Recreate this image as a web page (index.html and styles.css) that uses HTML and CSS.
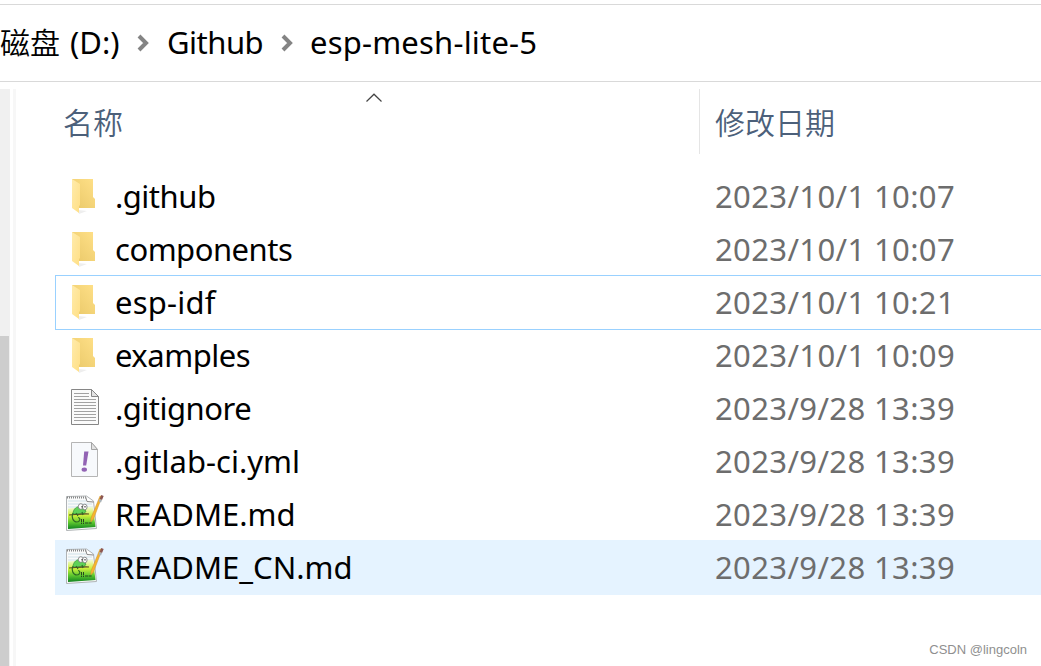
FILE: index.html
```html
<!DOCTYPE html>
<html lang="zh-CN">
<head>
    <meta charset="UTF-8">
    <title>esp-mesh-lite-5</title>
    <link rel="stylesheet" href="styles.css">
</head>
<body>
    <!-- shared icons -->
    <svg class="icons">
        <defs>
            <linearGradient id="back" x1="0" y1="1" x2="1" y2="0">
                <stop offset="0" stop-color="#e9c868"/>
                <stop offset="1" stop-color="#ffe088"/>
            </linearGradient>
            <linearGradient id="front" x1="0" y1="0" x2="1" y2="1">
                <stop offset="0" stop-color="#ffebab"/>
                <stop offset="1" stop-color="#ffdf85"/>
            </linearGradient>
            <linearGradient id="grass" x1="0" y1="0" x2="0" y2="1">
                <stop offset="0" stop-color="#f4fbe0"/>
                <stop offset="0.4" stop-color="#cdf03c"/>
                <stop offset="0.7" stop-color="#5fc92f"/>
                <stop offset="1" stop-color="#118322"/>
            </linearGradient>
        </defs>
        <symbol id="folder" viewBox="0 0 40 40">
            <path d="M13 33l9 1-8 3z" fill="#eeeeee"/>
            <path d="M7 2h21v18l2 2v9H14L7 29z" fill="url(#back)"/>
            <path d="M7 2l8 5v21l-1 1v7l-7-5z" fill="url(#front)"/>
        </symbol>
        <symbol id="text" viewBox="0 0 40 40">
            <path d="M6.500 .5h20l7 7v28h-27z" fill="#fbfbfb" stroke="#868686"/>
            <path d="M26.500 .5v7h7z" fill="#e3e3e3" stroke="#868686"/>
            <path d="M9 4.500h15M9 7.500h15M9 10.500h22M9 13.500h22M9 16.500h22M9 19.500h22M9 22.500h22M9 25.500h22M9 28.500h22M9 31.500h22" stroke="#a2a2a2"/>
        </symbol>
        <symbol id="yml" viewBox="0 0 40 40">
            <path d="M6.500 .5h20l6 7v27h-26z" fill="#f7f9fc" stroke="#b5b5b5"/>
            <path d="M26.500 .5v7h6z" fill="#e3e3e3" stroke="#a5a5a5"/>
            <path d="M19.200 9.500h4.300l-2.300 14h-3.200z" fill="#9263b4"/>
            <ellipse cx="19.300" cy="27.600" rx="2.700" ry="2.200" fill="#9263b4"/>
        </symbol>
        <symbol id="notepad" viewBox="0 0 40 40">
            <path d="M1.500 1.500l20-.5 7 5 3 27.500-30 2z" fill="#f9fafa" stroke="#b0b4b6"/>
            <path d="M3 6h18M3 9h24M3 12h25" stroke="#cfe2ea"/>
            <path d="M3 13.500l25-2 2.500 20.500-27.500 2z" fill="url(#grass)"/>
            <path d="M2 2.500h19" stroke="#888" stroke-width="2" stroke-dasharray="1 1"/>
            <path d="M20.500 1.500l1.500 5 6.500 .5" fill="#fff" stroke="#888"/>
            <path d="M8 19c0-5 4-8.500 8-7l5 4c-1 3-4 3-8 3z" fill="#5fd257" stroke="#3a9a3c" stroke-width=".8"/>
            <path d="M4 20c6 0 11-1.500 20-1" fill="none" stroke="#5b4a24" stroke-width="1.200"/>
            <path d="M8 18c-2 4 0 9 4 9 3 0 4-4 1-4.500M11 18l2 3M17 17l1 3" fill="none" stroke="#2f6b25" stroke-width="1.200"/>
            <ellipse cx="15.800" cy="11.500" rx="2.500" ry="2.800" fill="#fff" stroke="#777" stroke-width=".8"/>
            <ellipse cx="19.800" cy="12" rx="2.300" ry="2.800" fill="#fff" stroke="#777" stroke-width=".8"/>
            <path d="M17 11v1.500M20 11v1.500" stroke="#222"/>
            <path d="M16.500 24v5M18.500 24v5M20 28h7" stroke="#25471f" stroke-dasharray="3 .6"/>
            <path d="M37 1.500l-8.500 22.500-2.700 3 .2-4L35 1z" fill="#f7b52c" stroke="#c98f3b" stroke-width=".5"/>
            <path d="M37.500 .5l-1.700 4" stroke="#8c5752" stroke-width="2.600"/>
            <path d="M35.800 4.500l-1 2.500" stroke="#a9b2b8" stroke-width="2.600"/>
        </symbol>
    </svg>

    <div class="address">
        <span class="crumb drive"><span class="cn">地磁盘</span> (D:)</span>
        <svg class="chevron" viewBox="0 0 13 18"><path d="M2 2l7 7-7 7"/></svg>
        <span class="crumb github">Github</span>
        <svg class="chevron" viewBox="0 0 13 18"><path d="M2 2l7 7-7 7"/></svg>
        <span class="crumb current">esp-mesh-lite-5</span>
    </div>

    <div class="main">
        <div class="scrollbar"><div class="thumb"></div></div>
        <div class="divider"></div>
        <div class="files">
            <div class="header">
                <div class="col-name">名称
                    <svg class="sort" viewBox="0 0 16 10"><path d="M.5 8.500l7.500-7.300 7.500 7.300"/></svg>
                </div>
                <div class="col-date">修改日期</div>
            </div>
            <div class="row">
                <svg class="icon"><use href="#folder"/></svg>
                <span class="name narrow">.github</span>
                <span class="date">2023/10/1 10:07</span>
            </div>
            <div class="row">
                <svg class="icon"><use href="#folder"/></svg>
                <span class="name narrow">components</span>
                <span class="date">2023/10/1 10:07</span>
            </div>
            <div class="row focused">
                <svg class="icon"><use href="#folder"/></svg>
                <span class="name wide">esp-idf</span>
                <span class="date">2023/10/1 10:21</span>
            </div>
            <div class="row">
                <svg class="icon"><use href="#folder"/></svg>
                <span class="name narrow">examples</span>
                <span class="date">2023/10/1 10:09</span>
            </div>
            <div class="row">
                <svg class="icon"><use href="#text"/></svg>
                <span class="name narrow">.gitignore</span>
                <span class="date">2023/9/28 13:39</span>
            </div>
            <div class="row">
                <svg class="icon"><use href="#yml"/></svg>
                <span class="name">.gitlab-ci.yml</span>
                <span class="date">2023/9/28 13:39</span>
            </div>
            <div class="row">
                <svg class="icon"><use href="#notepad"/></svg>
                <span class="name">README.md</span>
                <span class="date">2023/9/28 13:39</span>
            </div>
            <div class="row hover">
                <svg class="icon"><use href="#notepad"/></svg>
                <span class="name">README_CN.md</span>
                <span class="date">2023/9/28 13:39</span>
            </div>
            <div class="watermark">CSDN @lingcoln</div>
        </div>
    </div>
</body>
</html>
```
FILE: styles.css
```css
* {
    box-sizing: border-box;
}
body {
    margin: 0;
    height: 666px;
    overflow: hidden;
    padding-top: 4px;
    background-color: #fff;
    color: #000;
    font-family: "Noto Sans", "Noto Sans CJK SC", sans-serif;
    font-size: 31px;
    display: flex;
    flex-direction: column;
}
.icons {
    position: absolute;
    width: 0;
    height: 0;
}

/* address bar */
.address {
    height: 78px;
    flex: none;
    display: flex;
    align-items: center;
    border-top: 1px solid #d9d9d9;
    border-bottom: 1px solid #d9d9d9;
    white-space: nowrap;
}
.crumb {
    height: 42px;
    line-height: 40px;
}
.drive {
    height: 44px;
    width: 150px;
    margin-left: -30px;
}
.cn {
    margin-right: 2px;
    font-family: "Noto Sans CJK SC", sans-serif;
    font-size: 30px;
    font-weight: 350;
}
.chevron {
    width: 13px;
    height: 18px;
    margin: 0 16px 1px 17px;
    fill: none;
    stroke: #848484;
    stroke-width: 4;
}
.github {
    width: 98px;
    padding-left: 1px;
    letter-spacing: -0.5px;
}
.current {
    letter-spacing: 0.2px;
}

.main {
    flex: 1;
    display: flex;
    padding-top: 7px;
}
.scrollbar {
    width: 10px;
    padding-top: 247px;
    background-color: #f0f0f0;
}
.thumb {
    width: 9px;
    height: 100%;
    background-color: #cdcdcd;
}
.divider {
    width: 3px;
    margin-left: 3px;
    background-color: #f7f7f7;
}
.files {
    flex: 1;
    padding-left: 39px;
    display: flex;
    flex-direction: column;
}

/* column titles */
.header {
    display: flex;
    height: 65px;
    margin-bottom: 15px;
    line-height: 64px;
    font-family: "Noto Sans CJK SC", sans-serif;
    font-size: 30px;
    font-weight: 350;
    color: #4c607a;
}
.col-name {
    width: 645px;
    padding-left: 8px;
    position: relative;
    border-right: 1px solid #e5e5e5;
}
.col-date {
    padding-left: 15px;
}
.sort {
    position: absolute;
    left: 311px;
    top: 4px;
    width: 16px;
    height: 10px;
    fill: none;
    stroke: #444;
    stroke-width: 1.2;
}

.row {
    display: flex;
    align-items: center;
    flex: none;
    height: 55px;
    margin-bottom: -2px;
    padding-left: 9px;
    border: 1px solid transparent;
    border-right: none;
}
.focused {
    border-color: #99d1ff;
}
.hover {
    background-color: #e5f3ff;
    border-color: #e5f3ff;
}
.icon {
    width: 40px;
    height: 40px;
    margin-right: 10px;
    flex: none;
}
.name {
    width: 600px;
    padding-bottom: 2px;
}
.narrow {
    letter-spacing: -0.5px;
}
.wide {
    letter-spacing: 0.2px;
}
.date {
    padding-bottom: 2px;
    letter-spacing: 0.37px;
    color: #6d6d6d;
}
.watermark {
    margin: auto 14px 7px auto;
    font-family: "Liberation Sans", sans-serif;
    font-size: 13px;
    line-height: 18px;
    color: #8f8f8f;
}
```
